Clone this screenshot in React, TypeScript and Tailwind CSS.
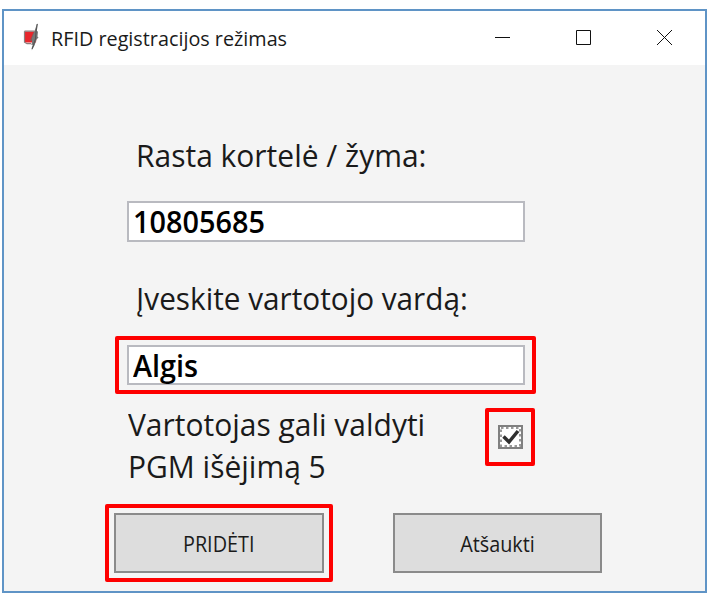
import React from "react";

function Logo() {
  return (
    <svg width="18" height="30" viewBox="0 0 18 30" className="shrink-0">
      <path d="M2 8.500h12l-1 11H2z" fill="#e8262c" />
      <path d="M1.500 8.200h10M1.500 8.200v11l2.500 1.500h4" stroke="#8c7d7d" strokeWidth="1.200" fill="none" />
      <path d="M11.500 9l-4 9M13 13l-5 4" stroke="#8d5555" strokeWidth="1.500" fill="none" />
      <path d="M14.300 0L11.500 8 9 15v5l-1 1.500 2 .500-1.500 5.500 3-5 2-6 2-2-1-1 .500-5-1.500-.500z" fill="#777" />
      <path d="M14.300 1l-1.300 8-.5 7-2 6-1.500 4" stroke="#555" strokeWidth="1.200" fill="none" />
    </svg>
  );
}

function TitleBar() {
  return (
    <header className="flex h-[54px] items-center bg-white pl-[19px] text-[20.5px]">
      <Logo />
      <span className="ml-[10px] w-[360px] origin-left scale-x-[0.965] whitespace-nowrap leading-[54px]">
        RFID registracijos režimas
      </span>
      <svg width="188" height="20" viewBox="0 0 188 20" className="ml-[81px] shrink-0" fill="none" stroke="#111">
        <path d="M3 9.500h15" />
        <path d="M84.500 2.500h14v14h-14z" />
        <path d="M165 2l15 15M180 2l-15 15" />
      </svg>
    </header>
  );
}

export default function App() {
  return (
    <main className="h-[599px] w-[710px] overflow-hidden bg-white pl-[2px] pt-[9px] font-['Open_Sans','Noto_Sans',sans-serif] text-[#1a1a1a]">
      <div className="h-[584px] w-[705px] overflow-hidden border-2 border-[#5f94c6] bg-[#f4f4f4]">
        <TitleBar />
        <section className="flex flex-col items-start pl-[101px] pt-[70px] text-[31px]">
          <label className="ml-[31px] h-10 origin-left scale-x-[0.967] whitespace-nowrap leading-10">
            Rasta kortelė / žyma:
          </label>
          <div className="ml-[22px] mt-[26px] h-[41px] w-[398px] border-2 border-[#b9bac0] bg-white pl-[4px] font-semibold leading-[36px] text-black">
            <span className="inline-block origin-left scale-x-[0.93]">10805685</span>
          </div>
          <label className="ml-[31px] mt-[36px] h-10 origin-left scale-x-[0.959] whitespace-nowrap leading-10">
            Įveskite vartotojo vardą:
          </label>
          <div className="ml-[10px] mt-[18px] h-[58px] w-[421px] rounded-[2px] border-4 border-[#fe0000] p-[5px] pl-[8px]">
            <div className="h-[40px] w-[398px] border-2 border-[#b9bac0] bg-white pl-[4px] font-semibold leading-[36px] text-black">
              <span className="inline-block origin-left scale-x-[0.93]">Algis</span>
            </div>
          </div>
          <div className="mt-[9px] flex w-[430px] items-start justify-between pl-[23px]">
            <p className="whitespace-nowrap leading-[42px]">
              <span className="block origin-left scale-x-[0.967]">Vartotojas gali valdyti</span>
              <span className="block origin-left scale-x-[0.967]">PGM išėjimą 5</span>
            </p>
            <div className="mt-[5px] flex h-[58px] w-[50px] shrink-0 items-center justify-center rounded-[2px] border-4 border-[#fe0000]">
              <svg width="25" height="24" viewBox="0 0 25 24">
                <path d="M1 1h23v22H1z" fill="#fff" stroke="#808080" strokeWidth="2" />
                <path d="M3 3h19v18H3z" fill="none" stroke="#999" strokeWidth="2" strokeDasharray="2.500 2.500" />
                <path d="M5.500 11.500l5.500 5.500L20 6" fill="none" stroke="#303030" strokeWidth="3.500" />
              </svg>
            </div>
          </div>
          <div className="mt-[17px] flex items-center text-[22px]">
            <div className="h-[78px] w-[228px] rounded-[2px] border-4 border-[#fe0000] p-[5px]">
              <button className="flex h-[60px] w-[210px] items-center justify-center border-2 border-[#8a8a8a] bg-[#ddd]">
                <span className="scale-x-[0.9]">PRIDĖTI</span>
              </button>
            </div>
            <button className="ml-[60px] flex h-[60px] w-[209px] items-center justify-center border-2 border-[#8a8a8a] bg-[#ddd]">
              <span className="scale-x-[0.9]">Atšaukti</span>
            </button>
          </div>
        </section>
      </div>
    </main>
  );
}
